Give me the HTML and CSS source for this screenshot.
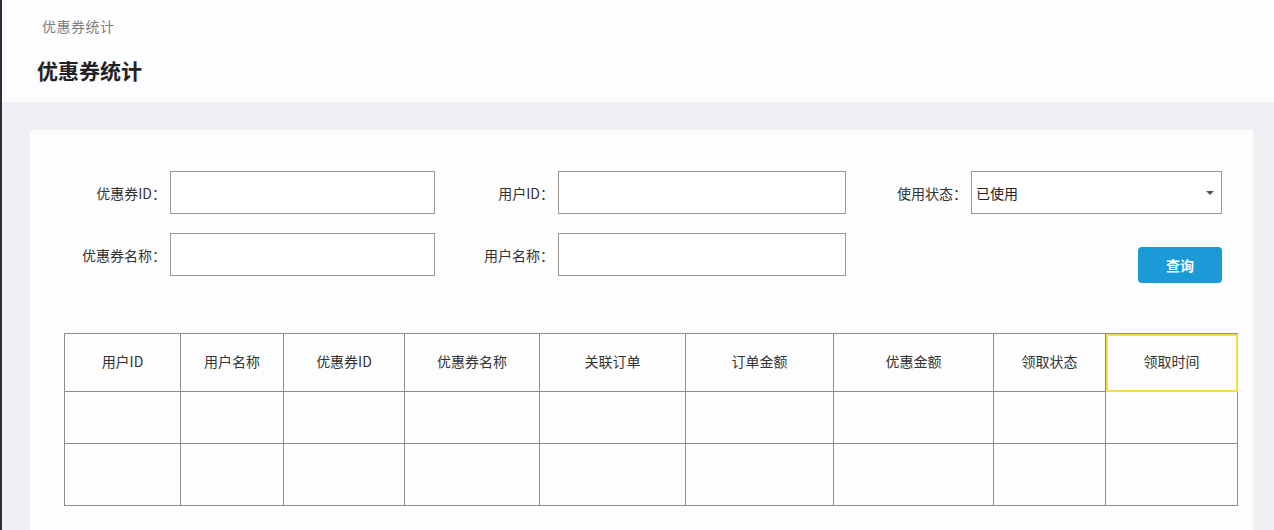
FILE: index.html
```html
<!DOCTYPE html>
<html lang="zh-CN">
<head>
    <meta charset="UTF-8">
    <meta name="viewport" content="width=device-width, initial-scale=1.0">
    <title>优惠券统计</title>
    <link rel="stylesheet" href="styles.css">
</head>
<body>
    <div class="page">
        <div class="page-header">
            <div class="breadcrumb">优惠券统计</div>
            <h1>优惠券统计</h1>
        </div>

        <div class="main">
            <div class="card">
                <form class="search-form" id="search-form">
                    <label for="coupon_id">优惠券ID：</label>
                    <input type="text" id="coupon_id">

                    <label for="user_id">用户ID：</label>
                    <input type="text" id="user_id">

                    <label for="status">使用状态：</label>
                    <div class="select-wrap">
                        <select id="status">
                            <option>已使用</option>
                            <option>未使用</option>
                            <option>已过期</option>
                        </select>
                    </div>

                    <label for="coupon_name">优惠券名称：</label>
                    <input type="text" id="coupon_name">

                    <label for="user_name">用户名称：</label>
                    <input type="text" id="user_name">

                    <span></span>
                    <div class="btn-cell">
                        <button type="button">查询</button>
                    </div>
                </form>

                <table class="data-table">
                    <colgroup>
                        <col style="width: 116px">
                        <col style="width: 103px">
                        <col style="width: 121px">
                        <col style="width: 135px">
                        <col style="width: 146px">
                        <col style="width: 148px">
                        <col style="width: 160px">
                        <col style="width: 112px">
                        <col style="width: 132px">
                    </colgroup>
                    <thead>
                        <tr>
                            <th>用户ID</th>
                            <th>用户名称</th>
                            <th>优惠券ID</th>
                            <th>优惠券名称</th>
                            <th>关联订单</th>
                            <th>订单金额</th>
                            <th>优惠金额</th>
                            <th>领取状态</th>
                            <th class="active">领取时间</th>
                        </tr>
                    </thead>
                    <tbody>
                        <tr class="row-a">
                            <td></td><td></td><td></td><td></td><td></td><td></td><td></td><td></td><td></td>
                        </tr>
                        <tr class="row-b">
                            <td></td><td></td><td></td><td></td><td></td><td></td><td></td><td></td><td></td>
                        </tr>
                    </tbody>
                </table>
            </div>
        </div>
    </div>
</body>
</html>
```

FILE: styles.css
```css
body {
    font-family: "Noto Sans CJK SC", "Noto Sans", sans-serif;
    background-color: #f0f0f4;
    margin: 0;
    padding: 0;
    color: #333;
}

.page {
    border-left: 2px solid #27303c;
    height: 530px;
    overflow: hidden;
    box-sizing: border-box;
}

.page-header {
    background-color: #fdfcfe;
    height: 102px;
    padding: 16px 0 0 35px;
    box-sizing: border-box;
}

.breadcrumb {
    font-size: 14px;
    line-height: 20px;
    color: #808080;
    margin-left: 5px;
    letter-spacing: 0.5px;
}

h1 {
    margin: 20px 0 0;
    font-size: 21px;
    line-height: 28px;
    font-weight: bold;
    color: #222;
}

.main {
    padding: 28px 21px 0 28px;
}

.card {
    background-color: #fdfdfe;
    border-radius: 3px;
    padding: 41px 16px 40px 34px;
}

.search-form {
    display: grid;
    grid-template-columns: 106px 265px 123px 288px 125px 251px;
    grid-template-rows: 43px 43px;
    row-gap: 19px;
    align-items: center;
}

.search-form label {
    text-align: right;
    font-size: 14px;
    color: #333;
    padding-right: 4px;
}

.search-form input[type="text"],
.search-form select {
    width: 100%;
    height: 43px;
    border: 1px solid #999;
    background-color: #fff;
    box-sizing: border-box;
    font-family: inherit;
    font-size: 14px;
    padding: 0 4px;
}

.select-wrap {
    position: relative;
}

.select-wrap select {
    appearance: none;
    -webkit-appearance: none;
    color: #222;
    border-radius: 0;
}

.select-wrap::after {
    content: "";
    position: absolute;
    right: 8px;
    top: 20px;
    border-left: 4px solid transparent;
    border-right: 4px solid transparent;
    border-top: 4px solid #555;
}

.btn-cell {
    align-self: start;
    display: flex;
    justify-content: flex-end;
    padding-top: 14px;
}

button {
    width: 84px;
    height: 36px;
    background-color: #1a9ad6;
    color: #fff;
    border: none;
    border-radius: 4px;
    font-family: inherit;
    font-size: 14px;
    font-weight: bold;
    cursor: pointer;
}

button:hover {
    background-color: #1588bf;
}

.data-table {
    margin-top: 57px;
    border-collapse: collapse;
    table-layout: fixed;
    width: 1173px;
}

.data-table th,
.data-table td {
    border: 1px solid #8c8c8c;
    padding: 0;
}

.data-table th {
    height: 58px;
    padding-bottom: 4px;
    box-sizing: border-box;
    font-size: 14px;
    font-weight: normal;
    color: #333;
    text-align: center;
}

.data-table th.active {
    outline: 2px solid #f3e03c;
    outline-offset: -2px;
}

.row-a td {
    height: 51px;
}

.row-b td {
    height: 61px;
}
```
